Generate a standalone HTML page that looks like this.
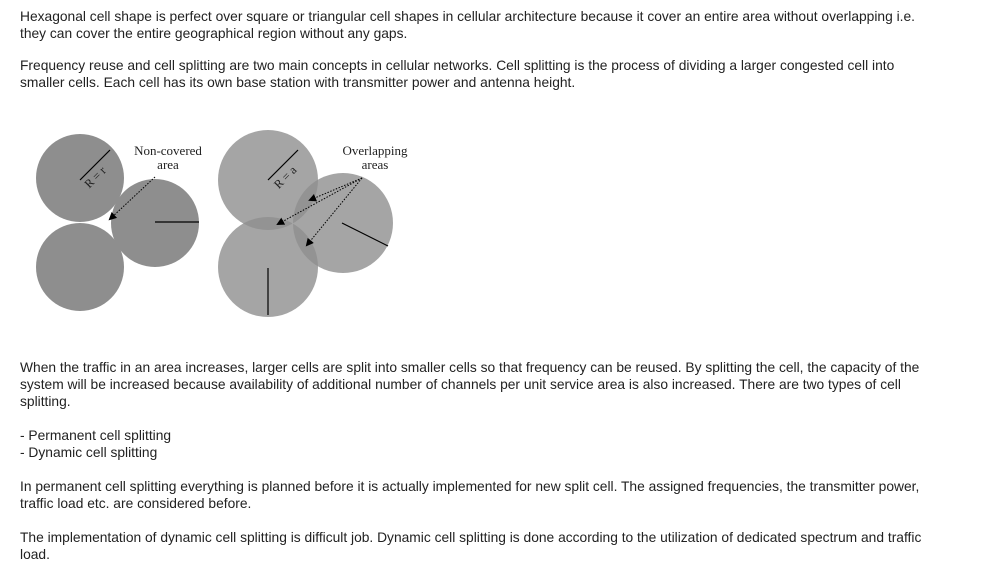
<!DOCTYPE html>
<html><head><style>
body{margin:0;background:#fff;font-family:"Liberation Sans",Arial,sans-serif;font-size:13.8px;color:#222;line-height:17px;}
p{position:absolute;left:20px;margin:0;width:960px;}
</style></head><body>
<p style="top:8px">Hexagonal cell shape is perfect over square or triangular cell shapes in cellular architecture because it cover an entire area without overlapping i.e.<br>they can cover the entire geographical region without any gaps.</p>
<p style="top:57px">Frequency reuse and cell splitting are two main concepts in cellular networks. Cell splitting is the process of dividing a larger congested cell into<br>smaller cells. Each cell has its own base station with transmitter power and antenna height.</p>
<svg style="position:absolute;left:20px;top:120px" width="400" height="210" viewBox="20 120 400 210">
<defs><marker id="a" markerWidth="8" markerHeight="8" refX="6" refY="4" orient="auto"><path d="M0,0L8,4L0,8z" fill="#000"/></marker></defs>
<g fill="#8e8e8e"><circle cx="80" cy="178" r="44"/><circle cx="80" cy="267" r="44"/><circle cx="155" cy="223" r="44"/></g>
<g fill="#8e8e8e" fill-opacity="0.8"><circle cx="268" cy="180" r="50"/><circle cx="268" cy="267" r="50"/><circle cx="343" cy="223" r="50"/></g>
<g stroke="#000" stroke-width="1.2"><line x1="80" y1="180" x2="110" y2="150"/><line x1="155" y1="222" x2="199" y2="222"/><line x1="268" y1="180" x2="298" y2="150"/><line x1="268" y1="268" x2="268" y2="315"/><line x1="342" y1="223" x2="388" y2="246"/></g>
<g stroke="#000" stroke-dasharray="1.5,1.5" fill="none" marker-end="url(#a)"><line x1="155" y1="177" x2="110" y2="219"/><line x1="362" y1="178" x2="310" y2="200"/><line x1="362" y1="178" x2="278" y2="224"/><line x1="362" y1="178" x2="307" y2="245"/></g>
<g font-family="Liberation Serif,serif" font-size="13" fill="#222" text-anchor="middle"><text x="168" y="155">Non-covered</text><text x="168" y="169">area</text><text x="375" y="155">Overlapping</text><text x="375" y="169">areas</text>
<text transform="translate(98,180) rotate(-45)" font-size="12">R = r</text><text transform="translate(288,180) rotate(-45)" font-size="12">R = a</text></g>
</svg>
<p style="top:359px">When the traffic in an area increases, larger cells are split into smaller cells so that frequency can be reused. By splitting the cell, the capacity of the<br>system will be increased because availability of additional number of channels per unit service area is also increased. There are two types of cell<br>splitting.</p>
<p style="top:427px">- Permanent cell splitting<br>- Dynamic cell splitting</p>
<p style="top:478px">In permanent cell splitting everything is planned before it is actually implemented for new split cell. The assigned frequencies, the transmitter power,<br>traffic load etc. are considered before.</p>
<p style="top:529px">The implementation of dynamic cell splitting is difficult job. Dynamic cell splitting is done according to the utilization of dedicated spectrum and traffic<br>load.</p>
</body></html>
